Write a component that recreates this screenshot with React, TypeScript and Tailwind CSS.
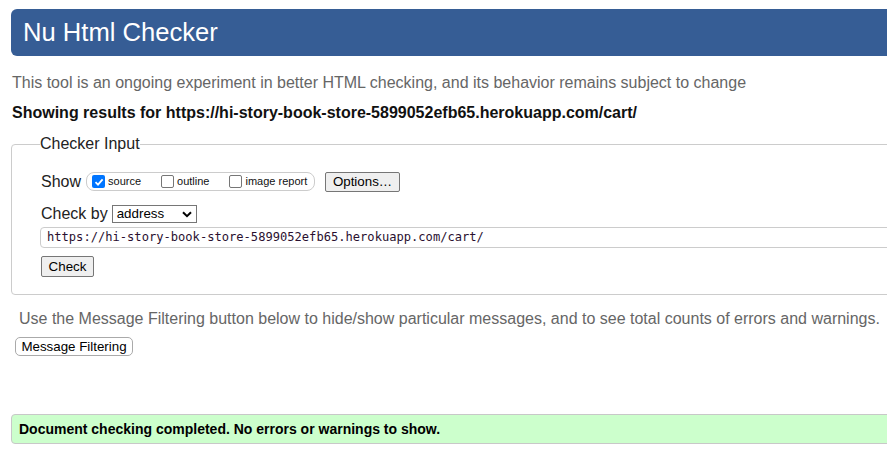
import React from 'react'

function Box({ checked = false }: { checked?: boolean }) {
  if (checked) {
    return (
      <span className="flex h-[13px] w-[13px] items-center justify-center rounded-[2px] bg-[#0075ff]">
        <svg width="10" height="10" viewBox="0 0 10 10">
          <path d="M1.5 5.2 L4 7.6 L8.6 2.4" fill="none" stroke="white" strokeWidth="1.8" />
        </svg>
      </span>
    )
  }
  return <span className="h-[13px] w-[13px] rounded-[2px] border border-[#767676] bg-white" />
}

function Option({ label, checked, className }: { label: string; checked?: boolean; className?: string }) {
  return (
    <span className={`flex items-center gap-[3px] ${className ?? ''}`}>
      <Box checked={checked} />
      <span className="text-[11px] leading-none text-[#111]">{label}</span>
    </span>
  )
}

export default function App() {
  return (
    <div className="h-[452px] w-[887px] overflow-hidden bg-white font-['Liberation_Sans',Arial,sans-serif] text-black">
      <div className="w-[940px]">
        <div className="ml-[11px] mt-[9px] flex h-[47px] items-center rounded-l-[6px] bg-[#365d95] pl-[12px]">
          <h1 className="text-[25.6px] leading-none text-white">Nu Html Checker</h1>
        </div>

        <p className="ml-[12px] mt-[17px] text-[16px] leading-[20px] text-[#666]">
          This tool is an ongoing experiment in better HTML checking, and its behavior remains subject to change
        </p>
        <p className="ml-[12px] mt-[10px] text-[16px] font-bold leading-[20px] text-[#111]">
          Showing results for https://hi-story-book-store-5899052efb65.herokuapp.com/cart/
        </p>

        <fieldset className="ml-[11px] mt-[11px] rounded-l-[4px] border border-[#ccc] pb-[17px] pl-[29px]">
          <legend className="-ml-[1px] px-0 text-[16px] leading-[20px] text-[#222]">Checker Input</legend>

          <div className="mt-[17px] flex h-[21px] items-center">
            <span className="text-[16px] leading-none text-[#222]">Show</span>
            <div className="ml-[5px] flex h-[19px] w-[229px] items-center rounded-[8px] border border-[#ccc] pl-[5px]">
              <Option label="source" checked />
              <Option label="outline" className="ml-[20px]" />
              <Option label="image report" className="ml-[20px]" />
            </div>
            <button className="ml-[10px] flex h-[20px] w-[75px] items-center justify-center rounded-[2px] border border-[#767676] bg-[#efefef] text-[13.33px] leading-none text-black">
              Options…
            </button>
          </div>

          <div className="mt-[13px] flex h-[18px] items-center">
            <span className="text-[16px] leading-none text-[#222]">Check by</span>
            <div className="ml-[4px] flex h-[18px] w-[85px] items-center justify-between border border-[#767676] bg-white pl-[4px] pr-[4px]">
              <span className="text-[13.33px] leading-none text-black">address</span>
              <svg width="10" height="7" viewBox="0 0 10 7">
                <path d="M1 1.2 L5 5.2 L9 1.2" fill="none" stroke="black" strokeWidth="2" />
              </svg>
            </div>
          </div>

          <div className="-ml-[1px] mt-[4px] flex h-[21px] items-center rounded-l-[4px] border border-[#ccc] pl-[6px]">
            <span className="font-['DejaVu_Sans_Mono',monospace] text-[12.1px] leading-none text-[#2a1030]">
              https://hi-story-book-store-5899052efb65.herokuapp.com/cart/
            </span>
          </div>

          <button className="mt-[8px] flex h-[21px] w-[53px] items-center justify-center rounded-[2px] border border-[#767676] bg-[#efefef] text-[13.33px] leading-none text-black">
            Check
          </button>
        </fieldset>

        <p className="ml-[19px] mt-[14px] text-[16px] leading-[20px] text-[#666]">
          Use the Message Filtering button below to hide/show particular messages, and to see total counts of errors and warnings.
        </p>
        <button className="ml-[15px] mt-[8px] flex h-[19px] w-[118px] items-center justify-center rounded-[5px] border border-[#aaa] bg-white text-[13.33px] leading-none text-black">
          Message Filtering
        </button>

        <div className="ml-[11px] mt-[58px] flex h-[30px] items-center rounded-l-[4px] border border-[#c8c8c8] bg-[#ccffcc] pl-[7px]">
          <p className="text-[14px] font-bold leading-none text-black">
            Document checking completed. No errors or warnings to show.
          </p>
        </div>
      </div>
    </div>
  )
}
